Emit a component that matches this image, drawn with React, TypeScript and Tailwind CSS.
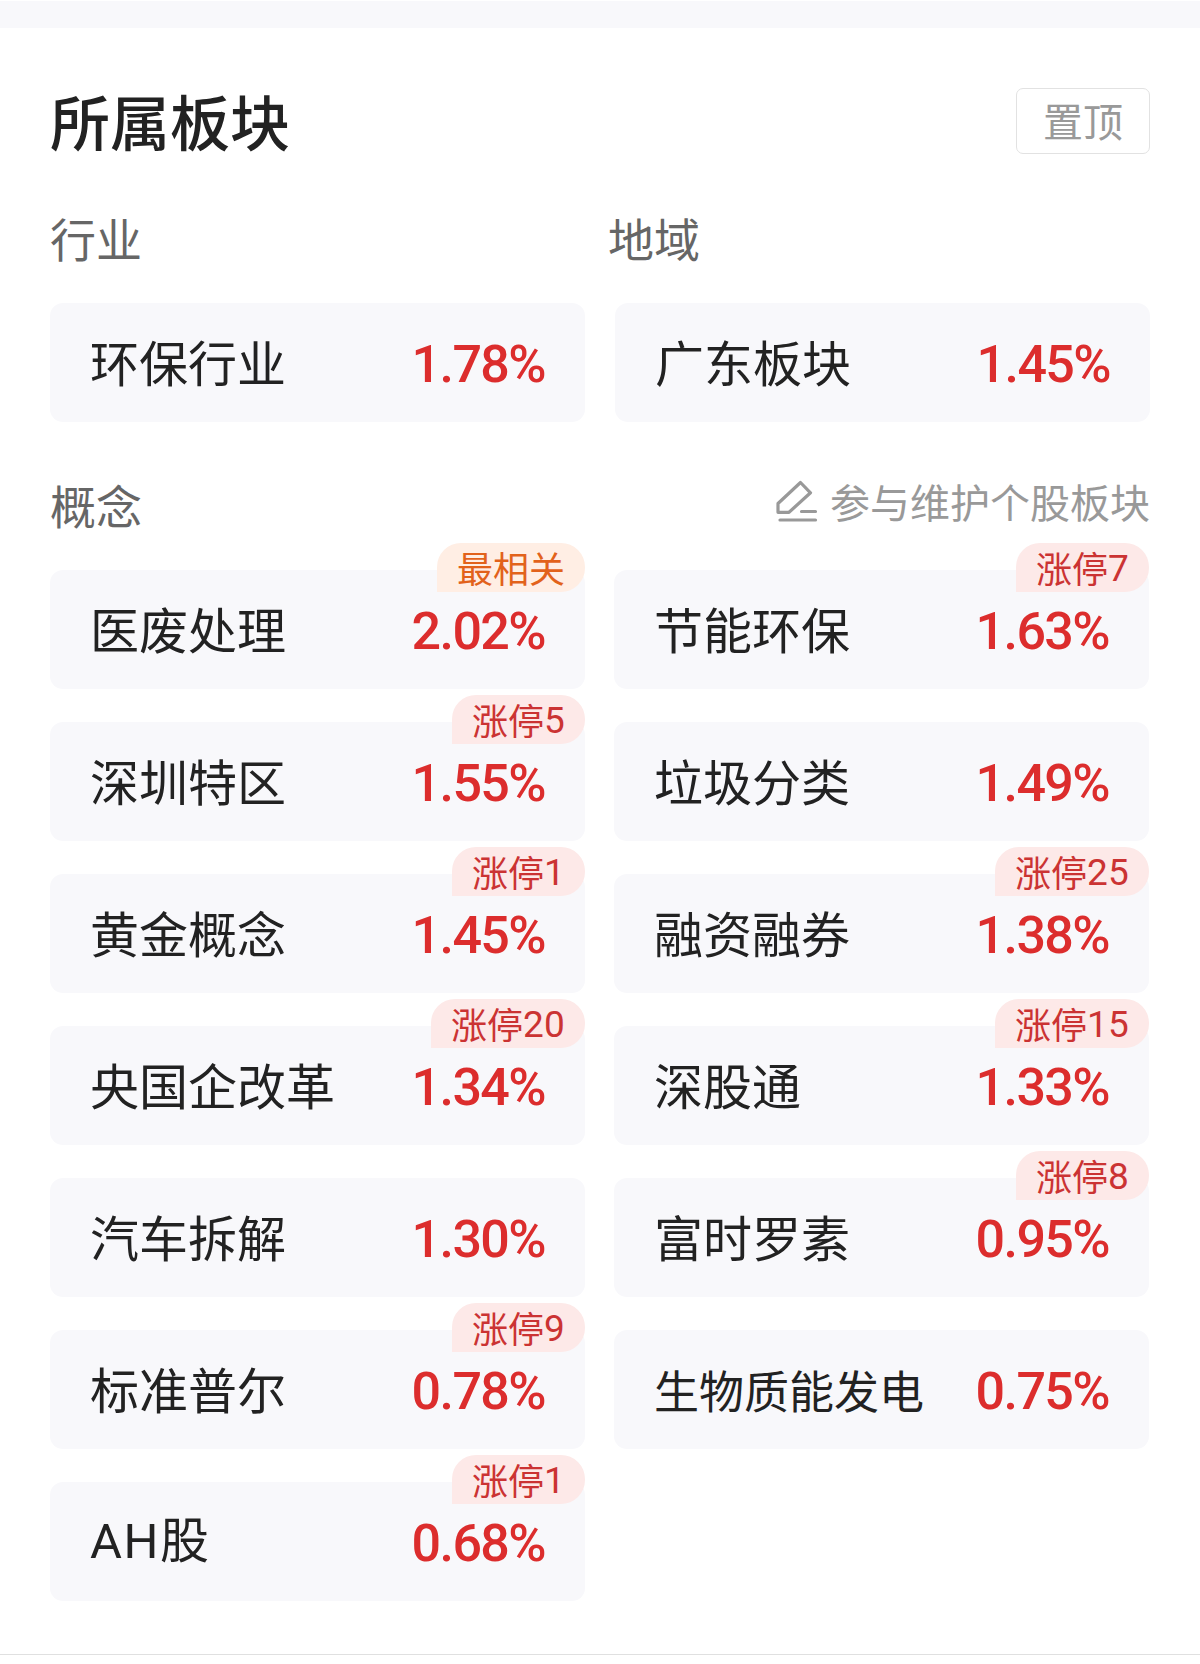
import React from "react";

type Sector = {
  name: string;
  change: string;
  tag?: string;
  hot?: boolean;
  small?: boolean;
};

const concepts: Sector[] = [
  { name: "医废处理", change: "2.02%", tag: "最相关", hot: true },
  { name: "节能环保", change: "1.63%", tag: "涨停7" },
  { name: "深圳特区", change: "1.55%", tag: "涨停5" },
  { name: "垃圾分类", change: "1.49%" },
  { name: "黄金概念", change: "1.45%", tag: "涨停1" },
  { name: "融资融券", change: "1.38%", tag: "涨停25" },
  { name: "央国企改革", change: "1.34%", tag: "涨停20" },
  { name: "深股通", change: "1.33%", tag: "涨停15" },
  { name: "汽车拆解", change: "1.30%" },
  { name: "富时罗素", change: "0.95%", tag: "涨停8" },
  { name: "标准普尔", change: "0.78%", tag: "涨停9" },
  { name: "生物质能发电", change: "0.75%", small: true },
  { name: "AH股", change: "0.68%", tag: "涨停1" },
];

const SectorCard: React.FC<{ sector: Sector }> = ({ sector }) => (
  <div className="relative flex h-[119px] items-center justify-between rounded-[13px] bg-[#f8f8fb] pl-10 pr-10">
    <span
      className={
        sector.small
          ? "pb-px text-[45px] leading-none text-[#222222]"
          : "pb-[5px] text-[49px] leading-none text-[#222222]"
      }
    >
      {/^[A-Z]+/.test(sector.name) ? (
        <>
          <span className="font-[Roboto] tracking-[1.5px]">{sector.name.match(/^[A-Z]+/)![0]}</span>
          {sector.name.replace(/^[A-Z]+/, "")}
        </>
      ) : (
        sector.name
      )}
    </span>
    <span className="pt-[4px] font-[Roboto] text-[52px] font-medium leading-none tracking-[-1.6px] text-[#dc2d2d]">
      {sector.change}
    </span>
    {sector.tag && (
      <span
        className={`absolute -top-[27px] right-0 flex h-[49px] items-center rounded-[24px] rounded-bl-none px-5 pb-[2px] text-[36px] leading-none ${
          sector.hot ? "bg-[#ffeee4] text-[#e2621b]" : "bg-[#fde9e8] text-[#cb3333]"
        }`}
      >
        {sector.tag.replace(/\d+/, "")}
        <span className="pt-[3px] font-[Roboto] text-[37px] tracking-[0.2px]">
          {sector.tag.replace(/\D+/, "")}
        </span>
      </span>
    )}
  </div>
);

const EditIcon: React.FC = () => (
  <svg
    width="42"
    height="42"
    viewBox="0 0 42 42"
    fill="none"
    stroke="currentColor"
    strokeWidth="3.2"
    strokeLinecap="round"
    strokeLinejoin="round"
  >
    <path d="M2 23.5 24.5 2.5 34.5 12.8 13 32.3H2Z" />
    <path d="M25.5 31.5H39.5M4 40H39.5" />
  </svg>
);

const App: React.FC = () => {
  return (
    <div className="min-h-[1664px] w-[1200px] bg-white pt-px font-['Noto_Sans_CJK_SC',sans-serif]">
      <div className="h-[27px] bg-[#f8f8fb]" />

      <section className="h-[1627px] border-b border-[#e0e0e0] px-[50px] pt-[60px]">
        <div className="flex h-[66px] items-center justify-between">
          <h1 className="pb-[2px] text-[60px] font-medium leading-none text-[#222222]">所属板块</h1>
          <button className="flex h-[66px] w-[134px] items-center justify-center rounded-[7px] border border-[#e2e2e2] pb-[2px] text-[40px] leading-none text-[#999999]">
            置顶
          </button>
        </div>

        <div className="mt-[59px] flex text-[46px] leading-[48px] text-[#666666]">
          <h2 className="w-[558px]">行业</h2>
          <h2>地域</h2>
        </div>
        <div className="mt-[42px] grid grid-cols-2 gap-[30px]">
          <SectorCard sector={{ name: "环保行业", change: "1.78%" }} />
          <SectorCard sector={{ name: "广东板块", change: "1.45%" }} />
        </div>

        <div className="mt-[58px] flex h-[48px] items-center justify-between">
          <h2 className="text-[46px] leading-[48px] text-[#666666]">概念</h2>
          <div className="flex items-center gap-[12px] pb-[6px] text-[#999999]">
            <EditIcon />
            <span className="text-[40px] leading-none">参与维护个股板块</span>
          </div>
        </div>
        <div className="mr-px mt-[42px] grid grid-cols-[535px_535px] justify-between gap-y-[33px]">
          {concepts.map((sector) => (
            <SectorCard key={sector.name} sector={sector} />
          ))}
        </div>
      </section>
    </div>
  );
};

export default App;
